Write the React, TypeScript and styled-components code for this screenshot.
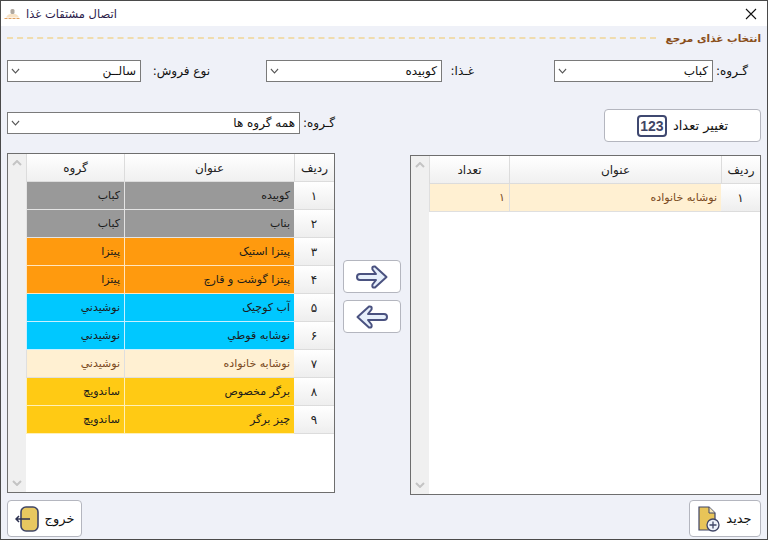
import * as React from "react"
import styled, { createGlobalStyle } from "styled-components"

const GlobalStyle = createGlobalStyle`
  html, body {
    margin: 0;
    padding: 0;
    background: #eff1f8;
  }
  * {
    box-sizing: border-box;
  }
`

type Row = { id: string; title: string; last: string; tone: string }

const TONES: Record<string, { bg: string; fg: string; line: string }> = {
  gray: { bg: "#999999", fg: "#1a1a1a", line: "#e4e4e4" },
  orange: { bg: "#ff9a0e", fg: "#1a1a1a", line: "#ffe6c0" },
  blue: { bg: "#00c8ff", fg: "#1a1a1a", line: "#c8f0ff" },
  cream: { bg: "#fff0d2", fg: "#7a4a22", line: "#dfdfdf" },
  yellow: { bg: "#ffca14", fg: "#1a1a1a", line: "#fff0b8" },
}

const foods: Row[] = [
  { id: "۱", title: "کوبیده", last: "کباب", tone: "gray" },
  { id: "۲", title: "بناب", last: "کباب", tone: "gray" },
  { id: "۳", title: "پیتزا استیک", last: "پیتزا", tone: "orange" },
  { id: "۴", title: "پیتزا گوشت و قارچ", last: "پیتزا", tone: "orange" },
  { id: "۵", title: "آب کوچیک", last: "نوشیدني", tone: "blue" },
  { id: "۶", title: "نوشابه قوطي", last: "نوشیدني", tone: "blue" },
  { id: "۷", title: "نوشابه خانواده", last: "نوشیدني", tone: "cream" },
  { id: "۸", title: "برگر مخصوص", last: "ساندویچ", tone: "yellow" },
  { id: "۹", title: "چیز برگر", last: "ساندویچ", tone: "yellow" },
]

const picked: Row[] = [{ id: "۱", title: "نوشابه خانواده", last: "۱", tone: "cream" }]

const Chevron = ({ up, heavy }: { up?: boolean; heavy?: boolean }) => (
  <svg width={heavy ? 10 : 9} height="6" viewBox="0 0 10 6" preserveAspectRatio="none">
    <path
      d={up ? "M1 5 L5 1 L9 5" : "M1 1 L5 5 L9 1"}
      fill="none"
      stroke="currentColor"
      strokeWidth={heavy ? 2 : 1.1}
    />
  </svg>
)

const Select = ({ value, width }: { value: string; width: number }) => (
  <SelectBox $width={width}>
    <span>{value}</span>
    <Chevron />
  </SelectBox>
)

const DataTable = ({ rows, cols, heads }: { rows: Row[]; cols: string; heads: string[] }) => (
  <TableArea>
    <HeadRow $cols={cols}>
      {heads.map((h) => (
        <HeadCell key={h}>{h}</HeadCell>
      ))}
    </HeadRow>
    {rows.map((r) => (
      <BodyRow key={r.id} $cols={cols}>
        <IdCell>{r.id}</IdCell>
        <Cell $tone={r.tone}>{r.title}</Cell>
        <Cell $tone={r.tone}>{r.last}</Cell>
      </BodyRow>
    ))}
  </TableArea>
)

const Panel = ({ width, shift, children }: { width: number; shift: number; children: React.ReactNode }) => (
  <PanelBox $width={width} $shift={shift}>
    {children}
    <ScrollTrack>
      <Chevron up heavy />
      <Chevron heavy />
    </ScrollTrack>
  </PanelBox>
)

const App = () => (
  <Win>
    <GlobalStyle />
    <TitleBar>
      <TitleGroup>
        <svg width="17" height="12" viewBox="0 0 17 12">
          <path d="M2 9.5 C3 7 5 6 6.5 6 L10.5 6 C12.5 6 14 7.5 15 9.5 Z" fill="#f7e2c6" />
          <path d="M0.5 10.5 H16.5" stroke="#e0a060" strokeWidth="1.2" strokeDasharray="3 1" />
          <rect x="6.5" y="1" width="4" height="5" rx="1.5" fill="#b0a89f" />
        </svg>
        <TitleText>اتصال مشتقات غذا</TitleText>
      </TitleGroup>
      <svg width="12" height="12" viewBox="0 0 12 12">
        <path d="M1 1 L11 11 M11 1 L1 11" stroke="#111" strokeWidth="1.1" />
      </svg>
    </TitleBar>

    <Content>
      <Section>
        <SectionTitle>انتخاب غذای مرجع</SectionTitle>
        <DashLine />
      </Section>

      <FilterRow>
        <Field $mr={0}>
          <Label $width={29}>گـروه:</Label>
          <Select value="کباب" width={159} />
        </Field>
        <Field $mr={80}>
          <Label $width={26}>غـذا:</Label>
          <Select value="کوبیده" width={176} />
        </Field>
        <Field $mr={56}>
          <Label $width={58} $gap={11}>نوع فروش:</Label>
          <Select value="سالــن" width={134} />
        </Field>
      </FilterRow>

      <ActionRow>
        <Btn $width={157} $height={33}>
          <span>تغییر تعداد</span>
          <CountBadge>123</CountBadge>
        </Btn>
        <GroupFilter $mr={0}>
          <Label $width={31} $gap={4}>گـروه:</Label>
          <Select value="همه گروه ها" width={293} />
        </GroupFilter>
      </ActionRow>

      <Main>
        <Panel width={351} shift={2}>
          <DataTable rows={picked} cols="39px 212px 80px" heads={["ردیف", "عنوان", "تعداد"]} />
        </Panel>

        <MoveColumn>
          <Btn $width={58} $height={33}>
            <svg width="32" height="26" viewBox="0 0 32 26">
              <path
                d="M4 10 H20 L16.5 5.5 Q15.5 2 19 2.5 L30.5 13 L19 23.5 Q15.5 24 16.5 20.5 L20 16 H4 Q1 16 1 13 Q1 10 4 10 Z"
                fill="#e6effb"
                stroke="#4a5280"
                strokeWidth="2"
                strokeLinejoin="round"
              />
            </svg>
          </Btn>
          <Btn $width={58} $height={33}>
            <svg width="32" height="26" viewBox="0 0 32 26">
              <path
                d="M28 10 H12 L15.5 5.5 Q16.5 2 13 2.5 L1.5 13 L13 23.5 Q16.5 24 15.5 20.5 L12 16 H28 Q31 16 31 13 Q31 10 28 10 Z"
                fill="#e6effb"
                stroke="#4a5280"
                strokeWidth="2"
                strokeLinejoin="round"
              />
            </svg>
          </Btn>
        </MoveColumn>

        <Panel width={328} shift={0}>
          <DataTable rows={foods} cols="40px 170px 98px" heads={["ردیف", "عنوان", "گروه"]} />
        </Panel>
      </Main>

      <Footer>
        <Btn $width={72} $height={37}>
          <span>جدید</span>
          <svg width="22" height="26" viewBox="0 0 22 26">
            <path d="M1 1 H11 L17 7 V24 H1 Z" fill="#e8c458" stroke="#3f4566" strokeWidth="1.2" />
            <path d="M11 1 V7 H17" fill="#f6e7b8" stroke="#3f4566" strokeWidth="1" />
            <circle cx="15" cy="19" r="6" fill="#eef2fa" stroke="#3f4566" strokeWidth="1.3" />
            <path d="M15 15.5 V22.5 M11.5 19 H18.5" stroke="#3f4566" strokeWidth="1.3" />
          </svg>
        </Btn>
        <Btn $width={75} $height={37}>
          <span>خروج</span>
          <svg width="24" height="26" viewBox="0 0 24 26">
            <rect x="6" y="1" width="17" height="24" rx="5" fill="#e8c860" stroke="#3f4566" strokeWidth="1.6" />
            <path d="M4 10 L1 13 L4 16 M2 13 H15" fill="none" stroke="#2c3150" strokeWidth="1.5" />
          </svg>
        </Btn>
      </Footer>
    </Content>
  </Win>
)

export default App

// Styles
const FONT = `"DejaVu Sans", "Noto Sans", sans-serif`

const Win = styled.div`
  width: 768px;
  height: 540px;
  display: flex;
  flex-direction: column;
  background: #eff1f8;
  border: 1px solid #4a4a4a;
  font-family: ${FONT};
  font-size: 12px;
  color: #111;
  overflow: hidden;
`

const TitleBar = styled.div`
  height: 25px;
  flex: none;
  display: flex;
  align-items: center;
  justify-content: space-between;
  padding: 0 10px 0 3px;
  background: #fff;
`

const TitleGroup = styled.div`
  display: flex;
  align-items: center;
  gap: 5px;
`

const TitleText = styled.span`
  direction: rtl;
  font-size: 11.5px;
  color: #2a1a4a;
`

const Content = styled.div`
  direction: rtl;
  flex: 1;
  display: flex;
  flex-direction: column;
  padding: 0 6px 2px 6px;
`

const Section = styled.div`
  height: 24px;
  display: flex;
  align-items: center;
  gap: 10px;
`

const SectionTitle = styled.div`
  font-size: 10.5px;
  font-weight: bold;
  color: #8a4f1c;
  white-space: nowrap;
`

const DashLine = styled.div`
  flex: 1;
  border-top: 2px dashed #f0dcae;
`

const FilterRow = styled.div`
  display: flex;
  padding-right: 13px;
  margin-top: 10px;
  height: 22px;
`

const Field = styled.div<{ $mr: number }>`
  display: flex;
  align-items: center;
  margin-right: ${(p) => p.$mr}px;
`

const GroupFilter = styled(Field)`
  align-self: flex-start;
  margin-top: 3px;
`

const Label = styled.div<{ $width: number; $gap?: number }>`
  width: ${(p) => p.$width}px;
  margin-left: ${(p) => p.$gap ?? 6}px;
  white-space: nowrap;
`

const SelectBox = styled.div<{ $width: number }>`
  width: ${(p) => p.$width}px;
  height: 22px;
  display: flex;
  align-items: center;
  justify-content: space-between;
  padding: 0 4px 0 3px;
  background: #fff;
  border: 1px solid #7a7a7a;
  color: #111;

  svg {
    color: #555;
  }
`

const ActionRow = styled.div`
  display: flex;
  align-items: center;
  justify-content: space-between;
  height: 33px;
  margin-top: 27px;
`

const Btn = styled.div<{ $width: number; $height: number }>`
  width: ${(p) => p.$width}px;
  height: ${(p) => p.$height}px;
  display: flex;
  align-items: center;
  justify-content: center;
  gap: 6px;
  background: #fff;
  border: 1px solid #b4b6bf;
  border-radius: 4px;
  font-size: 13px;
`

const CountBadge = styled.span`
  direction: ltr;
  width: 30px;
  height: 22px;
  display: flex;
  align-items: center;
  justify-content: center;
  border: 2px solid #3f4870;
  border-radius: 4px;
  font-family: "Liberation Sans", sans-serif;
  font-size: 14px;
  font-weight: bold;
  color: #3f4566;
`

const Main = styled.div`
  display: flex;
  justify-content: space-between;
  height: 342px;
  margin-top: 11px;
`

const PanelBox = styled.div<{ $width: number; $shift: number }>`
  width: ${(p) => p.$width}px;
  height: 340px;
  margin-top: ${(p) => p.$shift}px;
  display: flex;
  background: #fff;
  border: 1px solid #6e6e6e;
`

const ScrollTrack = styled.div`
  width: 18px;
  flex: none;
  display: flex;
  flex-direction: column;
  align-items: center;
  justify-content: space-between;
  padding: 6px 0;
  background: #f0f0f0;
  color: #c4c4c4;
`

const TableArea = styled.div`
  flex: 1;
`

const HeadRow = styled.div<{ $cols: string }>`
  display: grid;
  grid-template-columns: ${(p) => p.$cols};
  height: 28px;
`

const HeadCell = styled.div`
  display: flex;
  align-items: center;
  justify-content: center;
  background: linear-gradient(#ffffff, #f0f0f0);
  border-left: 1px solid #dcdcdc;
  border-bottom: 1px solid #dcdcdc;
  color: #222;
`

const BodyRow = styled.div<{ $cols: string }>`
  display: grid;
  grid-template-columns: ${(p) => p.$cols};
  height: 28px;
`

const IdCell = styled.div`
  display: flex;
  align-items: center;
  justify-content: center;
  background: linear-gradient(#ffffff, #eeeeee);
  border-bottom: 1px solid #dcdcdc;
  color: #222;
`

const Cell = styled.div<{ $tone: string }>`
  display: flex;
  align-items: center;
  padding: 0 4px;
  background: ${(p) => TONES[p.$tone].bg};
  color: ${(p) => TONES[p.$tone].fg};
  border-left: 1px solid ${(p) => TONES[p.$tone].line};
  border-bottom: 1px solid ${(p) => TONES[p.$tone].line};
  font-size: 11px;
`

const MoveColumn = styled.div`
  display: flex;
  flex-direction: column;
  gap: 7px;
  margin-top: 107px;
  margin-right: 1px;
`

const Footer = styled.div`
  display: flex;
  justify-content: space-between;
  align-items: flex-start;
  margin-top: 5px;
`
